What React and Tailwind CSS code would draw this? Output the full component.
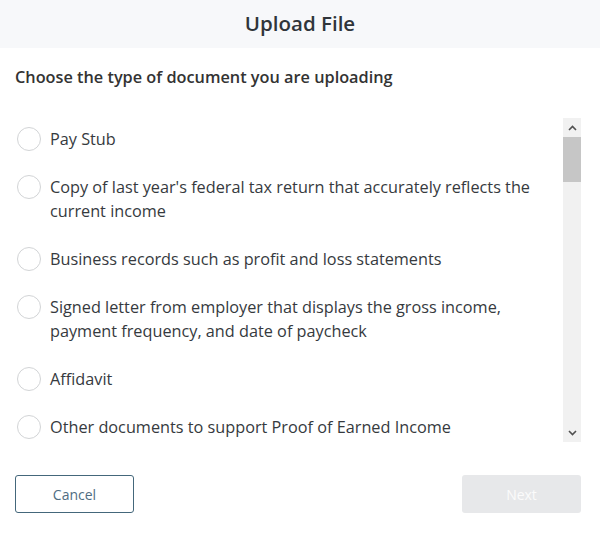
import React from "react";

const items = [
  "Pay Stub",
  "Copy of last year's federal tax return that accurately reflects the current income",
  "Business records such as profit and loss statements",
  "Signed letter from employer that displays the gross income, payment frequency, and date of paycheck",
  "Affidavit",
  "Other documents to support Proof of Earned Income",
];

export default function App() {
  return (
    <div
      className="w-[600px] h-[536px] bg-white text-[#333333] flex flex-col overflow-hidden"
      style={{ fontFamily: '"Open Sans", "Noto Sans", sans-serif' }}
    >
      <div className="h-[48px] bg-[#f7f8fa] flex items-center justify-center pb-[3px]">
        <h1 className="text-[20.5px] font-semibold leading-[28px] text-[#30353a]">Upload File</h1>
      </div>

      <div className="pt-[17px] px-[15px]">
        <p className="text-[16.3px] font-semibold leading-[24px] text-[#333333]">
          Choose the type of document you are uploading
        </p>
      </div>

      <div className="mt-[28px] h-[324px] flex pr-[19px]">
        <div className="flex-1 overflow-hidden pt-[10px] pl-[17px] pr-[8px]">
          <div className="flex flex-col gap-[24px]">
            {items.map((t) => (
              <label key={t} className="flex items-start gap-[9px] cursor-pointer">
                <span className="w-[24px] h-[24px] shrink-0 rounded-full border border-[#d2d4d6] bg-white" />
                <span className="text-[16.25px] leading-[24px] text-[#363a3e]">{t}</span>
              </label>
            ))}
          </div>
        </div>
        <div className="w-[18px] h-full bg-[#f1f1f1] flex flex-col mt-[1px]">
          <div className="h-[19px] flex items-center justify-center">
            <svg width="9" height="6" viewBox="0 0 9 6">
              <path d="M1 5 L4.5 1.5 L8 5" fill="none" stroke="#505050" strokeWidth="1.6" />
            </svg>
          </div>
          <div className="h-[45px] bg-[#c6c6c6]" />
          <div className="flex-1" />
          <div className="h-[19px] flex items-center justify-center">
            <svg width="9" height="6" viewBox="0 0 9 6">
              <path d="M1 1 L4.5 4.5 L8 1" fill="none" stroke="#505050" strokeWidth="1.6" />
            </svg>
          </div>
        </div>
      </div>

      <div className="mt-[34px] px-[15px] pr-[19px] flex justify-between">
        <button className="w-[119px] h-[38px] rounded-[3px] border border-[#44677b] bg-white text-[14px] text-[#4f6d82]">
          Cancel
        </button>
        <button className="w-[119px] h-[38px] rounded-[3px] bg-[#e7e8ea] text-[14px] text-[#fbfbfb]">
          Next
        </button>
      </div>
    </div>
  );
}
